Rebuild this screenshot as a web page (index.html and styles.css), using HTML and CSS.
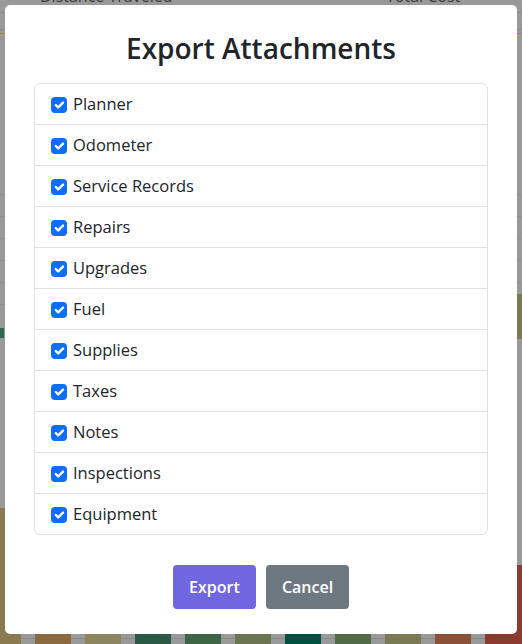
FILE: index.html
```html
<!DOCTYPE html>
<html lang="en">
<head>
<meta charset="utf-8">
<title>Export Attachments</title>
<link rel="stylesheet" href="styles.css">
</head>
<body>
<div class="backdrop">
  <div class="bg-head">
    <span class="bg-col1">Distance Traveled</span>
    <span class="bg-col2">Total Cost</span>
  </div>
  <div class="bg-rule bg-rule-a"></div>
  <div class="bg-rule bg-rule-b"></div>
  <div class="bg-rule bg-rule-c"></div>
  <div class="bg-mid">
    <div class="bg-rows">
      <div class="bg-row"></div><div class="bg-row"></div><div class="bg-row"></div>
      <div class="bg-row"></div><div class="bg-row"></div><div class="bg-row"></div>
    </div>
    <div class="bg-marks">
      <span class="bg-green"></span>
      <span class="bg-olive"></span>
    </div>
  </div>
  <div class="bg-chart">
    <span class="bar b1"></span>
    <span class="bar b2"></span>
    <span class="bar b3"></span>
    <span class="bar b4"></span>
    <span class="bar b5"></span>
    <span class="bar b6"></span>
    <span class="bar b7"></span>
    <span class="bar b8"></span>
    <span class="bar b9"></span>
    <span class="bar b10"></span>
    <span class="bar b11"></span>
  </div>
</div>

<div class="overlay">
  <div class="modal" role="dialog" aria-labelledby="modal-title">
    <h2 class="modal-title" id="modal-title">Export Attachments</h2>
    <div class="modal-content">
      <ul class="list">
        <li class="item"><span class="check"><svg viewBox="0 0 20 20"><path d="m6 10 3 3 6-6"/></svg></span>Planner</li>
        <li class="item"><span class="check"><svg viewBox="0 0 20 20"><path d="m6 10 3 3 6-6"/></svg></span>Odometer</li>
        <li class="item"><span class="check"><svg viewBox="0 0 20 20"><path d="m6 10 3 3 6-6"/></svg></span>Service Records</li>
        <li class="item"><span class="check"><svg viewBox="0 0 20 20"><path d="m6 10 3 3 6-6"/></svg></span>Repairs</li>
        <li class="item"><span class="check"><svg viewBox="0 0 20 20"><path d="m6 10 3 3 6-6"/></svg></span>Upgrades</li>
        <li class="item"><span class="check"><svg viewBox="0 0 20 20"><path d="m6 10 3 3 6-6"/></svg></span>Fuel</li>
        <li class="item"><span class="check"><svg viewBox="0 0 20 20"><path d="m6 10 3 3 6-6"/></svg></span>Supplies</li>
        <li class="item"><span class="check"><svg viewBox="0 0 20 20"><path d="m6 10 3 3 6-6"/></svg></span>Taxes</li>
        <li class="item"><span class="check"><svg viewBox="0 0 20 20"><path d="m6 10 3 3 6-6"/></svg></span>Notes</li>
        <li class="item"><span class="check"><svg viewBox="0 0 20 20"><path d="m6 10 3 3 6-6"/></svg></span>Inspections</li>
        <li class="item"><span class="check"><svg viewBox="0 0 20 20"><path d="m6 10 3 3 6-6"/></svg></span>Equipment</li>
      </ul>
    </div>
    <div class="actions">
      <button class="btn btn-confirm" type="button">Export</button>
      <button class="btn btn-cancel" type="button">Cancel</button>
    </div>
  </div>
</div>
</body>
</html>
```
FILE: styles.css
```css
html, body {
  margin: 0;
  padding: 0;
}
body {
  width: 522px;
  height: 644px;
  overflow: hidden;
  position: relative;
  background: #999999;
  font-family: "Open Sans", "Noto Sans", sans-serif;
}

/* dimmed page behind the dialog */
.backdrop {
  height: 644px;
  display: flex;
  flex-direction: column;
  overflow: hidden;
}
.bg-head {
  display: flex;
  margin-top: -14px;
  height: 20px;
  font-size: 16px;
  line-height: 20px;
  color: #3a3a3a;
}
.bg-col1 { margin-left: 40px; width: 346px; }
.bg-rule { height: 0; }
.bg-rule-a { margin-top: 6px; border-top: 1px solid #8c8c8c; }
.bg-rule-b { margin-top: 16px; border-top: 1px solid #8c8c8c; }
.bg-rule-c { margin-top: 3px; border-top: 1px solid #a58a3c; }
.bg-mid {
  flex: 1;
  position: relative;
}
.bg-rows {
  padding-top: 160px;
  display: flex;
  flex-direction: column;
  gap: 21px;
}
.bg-row {
  border-top: 1px solid #8e8e8e;
}
.bg-marks {
  position: absolute;
  left: 0;
  right: 0;
  top: 260px;
}
.bg-green {
  position: absolute;
  left: 0;
  top: 34px;
  width: 4px;
  height: 10px;
  background: #2c6b4c;
}
.bg-olive {
  position: absolute;
  right: 0;
  top: 0;
  width: 6px;
  height: 45px;
  background: #7a7a52;
}
.bg-chart {
  display: flex;
  align-items: flex-end;
  gap: 14px;
  margin-left: -15px;
  height: 136px;
  background-image: linear-gradient(#8a8a8a, #8a8a8a);
  background-size: 100% 1px;
  background-position: 0 130px;
  background-repeat: no-repeat;
}
.bar {
  width: 36px;
  flex: none;
}
.b1 { height: 136px; background: #8b7a50; }
.b2 { height: 60px; background: #8b6a40; }
.b3 { height: 60px; background: #8b8560; }
.b4 { height: 60px; background: #2a5a45; }
.b5 { height: 60px; background: #3d6645; }
.b6 { height: 60px; background: #6b7550; }
.b7 { height: 60px; background: #00523f; }
.b8 { height: 60px; background: #4f6b48; }
.b9 { height: 60px; background: #7a7a55; }
.b10 { height: 60px; background: #8b5035; }
.b11 { height: 79px; width: 40px; background: #8b3a30; }

/* dialog */
.overlay {
  position: absolute;
  inset: 0;
  display: flex;
  justify-content: center;
  align-items: flex-start;
  padding-top: 5px;
}
.modal {
  width: 512px;
  box-sizing: border-box;
  background: #ffffff;
  border-radius: 5px;
  padding: 0 0 20px;
}
.modal-title {
  margin: 0;
  padding: 25px 20px 0;
  font-size: 28px;
  font-weight: 600;
  line-height: 36px;
  text-align: center;
  color: #212529;
}
.modal-content {
  margin: 17px 29px 5px;
}
.list {
  list-style: none;
  margin: 0;
  padding: 0;
  border: 1px solid #dee2e6;
  border-radius: 6px;
}
.item {
  display: flex;
  align-items: center;
  padding: 8px 16px;
  font-size: 16.5px;
  line-height: 24px;
  color: #212529;
}
.item + .item {
  border-top: 1px solid #dee2e6;
}
.check {
  width: 16px;
  height: 16px;
  flex: none;
  margin-right: 6px;
  border-radius: 4px;
  background: #0d6efd;
  display: flex;
  position: relative;
  top: 1px;
}
.check svg {
  width: 16px;
  height: 16px;
  fill: none;
  stroke: #ffffff;
  stroke-width: 3;
  stroke-linecap: round;
  stroke-linejoin: round;
}
.actions {
  display: flex;
  justify-content: center;
  margin-top: 25px;
}
.btn {
  margin: 5px;
  padding: 10px 16px;
  border: 0;
  border-radius: 4px;
  font-family: inherit;
  font-size: 16px;
  font-weight: 600;
  line-height: 24px;
  color: #ffffff;
  min-width: 83px;
}
.btn-confirm { background: #7066e0; }
.btn-cancel { background: #6e7881; }
```
